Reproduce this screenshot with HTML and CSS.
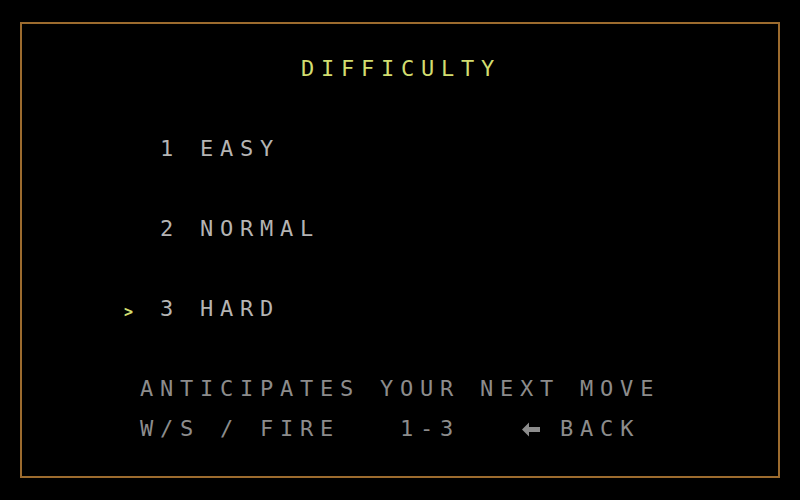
FILE: index.html
```html
<!DOCTYPE html>
<html>
<head>
<meta charset="utf-8">
<link rel="stylesheet" href="styles.css">
</head>
<body>
<div class="frame">
  <div class="title">DIFFICULTY</div>
  <div class="menu">
    <div class="row"><span class="cursor"></span><span class="item">1 EASY</span></div>
    <div class="row"><span class="cursor"></span><span class="item">2 NORMAL</span></div>
    <div class="row"><span class="cursor">&gt;</span><span class="item">3 HARD</span></div>
  </div>
  <div class="footer">
    <div class="line">ANTICIPATES YOUR NEXT MOVE</div>
    <div class="line">W/S / FIRE   1-3   <span class="arrow"><svg width="20" height="20" viewBox="0 0 20 20"><polygon points="2,10.5 9,3.5 9,8 20,8 20,13 9,13 9,17.5" fill="#8c8c8c"/></svg></span> BACK</div>
  </div>
</div>
</body>
</html>
```
FILE: styles.css
```css
html, body {
  margin: 0;
  padding: 0;
  background: #000;
}
body {
  width: 800px;
  height: 500px;
  overflow: hidden;
  font-family: "DejaVu Sans Mono", "Liberation Mono", monospace;
  font-size: 22px;
  letter-spacing: 6.76px;
  line-height: 20px;
}
.frame {
  box-sizing: border-box;
  margin: 22px 0 0 20px;
  width: 760px;
  height: 456px;
  border: 2px solid #9c6b2e;
  padding-top: 35px;
}
.title {
  text-align: center;
  color: #d2dd70;
  height: 20px;
  padding-left: 2px;
}
.menu {
  margin-top: 60px;
  margin-left: 98px;
  display: flex;
  flex-direction: column;
  gap: 60px;
}
.row {
  display: flex;
  height: 20px;
  white-space: pre;
}
.cursor {
  width: 40px;
  flex: none;
  color: #d2dd70;
  font-size: 15px;
  font-weight: bold;
  letter-spacing: 0;
  padding-left: 4px;
  box-sizing: border-box;
  padding-top: 3px;
}
.item {
  color: #b4b4b4;
}
.footer {
  margin-top: 60px;
  margin-left: 118px;
  display: flex;
  flex-direction: column;
  gap: 20px;
  color: #8c8c8c;
}
.line {
  height: 20px;
  white-space: pre;
}
.arrow {
  display: inline-block;
  width: 20px;
  height: 20px;
  vertical-align: top;
  letter-spacing: 0;
}
.arrow svg {
  display: block;
}
```
